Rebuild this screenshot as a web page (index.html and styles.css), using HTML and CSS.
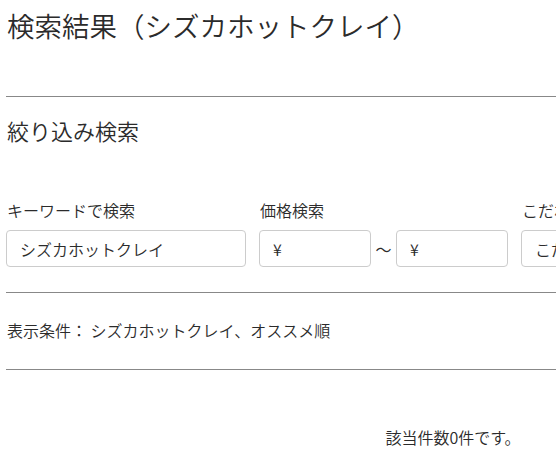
FILE: index.html
```html
<!DOCTYPE html>
<html lang="ja">
<head>
  <meta charset="UTF-8" />
  <meta name="viewport" content="width=device-width, initial-scale=1" />
  <title>検索結果</title>
  <link rel="stylesheet" href="styles.css">
</head>
<body>
  <div class="page">
    <h1 class="title">検索結果（シズカホットクレイ）</h1>

    <hr class="rule rule-top" />

    <h2 class="sub-title">絞り込み検索</h2>

    <div class="filters">
      <div class="field field-keyword">
        <label>キーワードで検索</label>
        <input type="text" value="シズカホットクレイ" />
      </div>

      <div class="field field-price">
        <label>価格検索</label>
        <div class="price-row">
          <input type="text" placeholder="¥" />
          <span class="tilde">〜</span>
          <input type="text" placeholder="¥" />
        </div>
      </div>

      <div class="field field-option">
        <label>こだわり検索</label>
        <select>
          <option>こだわり条件を選択</option>
        </select>
      </div>
    </div>

    <hr class="rule" />

    <p class="conditions">表示条件： シズカホットクレイ、オススメ順</p>

    <hr class="rule" />

    <p class="count">該当件数0件です。</p>
  </div>
</body>
</html>
```

FILE: styles.css
```css
html, body {
  overflow-x: hidden;
}
body {
  margin: 0;
  padding: 0 0 0 6px;
  font-family: "Noto Sans CJK JP", "Noto Sans", sans-serif;
  font-weight: 350;
  color: #2b2b2b;
  background: #fff;
}
.page {
  width: 894px;
}
.title {
  font-size: 27.5px;
  font-weight: 350;
  line-height: 36px;
  margin: 7px 0 0 1px;
}
.rule {
  border: none;
  border-top: 1px solid #888;
  margin: 0;
}
.rule-top {
  margin-top: 53px;
}
.sub-title {
  font-size: 22px;
  font-weight: 350;
  line-height: 30px;
  margin: 18px 0 0 1px;
}
.filters {
  display: flex;
  gap: 13px;
  margin-top: 55px;
  margin-bottom: 25px;
}
.field label {
  display: block;
  font-size: 16px;
  line-height: 20px;
  margin: 0 0 10px 1px;
}
.field input,
.field select {
  box-sizing: border-box;
  height: 37px;
  border: 1px solid #ccc;
  border-radius: 4px;
  padding: 0 13px;
  font-family: inherit;
  font-weight: 350;
  font-size: 16px;
  color: #2b2b2b;
  background: #fff;
}
.field input::placeholder {
  color: #2b2b2b;
}
.field-keyword input {
  width: 240px;
}
.price-row {
  display: flex;
  align-items: center;
}
.price-row input {
  width: 112px;
}
.tilde {
  width: 25px;
  text-align: center;
  font-size: 16px;
}
.field-option select {
  width: 220px;
  appearance: none;
}
.conditions {
  font-size: 16px;
  line-height: 22px;
  margin: 26px 0 28px 1px;
}
.count {
  font-size: 16px;
  line-height: 22px;
  margin: 56px 0 0;
  text-align: center;
}
```
